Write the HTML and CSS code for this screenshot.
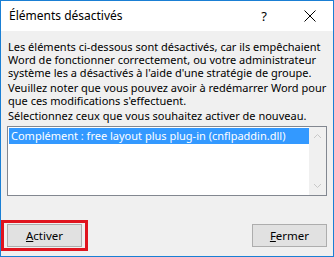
FILE: index.html
```html
<!DOCTYPE html>
<html lang="fr">
<head>
    <meta charset="UTF-8">
    <title>Éléments désactivés</title>
    <link rel="stylesheet" href="styles.css">
</head>
<body>
    <div class="window">
        <div class="titlebar">
            <span class="title">Éléments désactivés</span>
            <span class="help">?</span>
            <svg class="close" width="12" height="12" viewBox="0 0 12 12">
                <path d="M0.5 0.5 L11.5 11.5 M11.5 0.5 L0.5 11.5" stroke="#000" stroke-width="1" fill="none"/>
            </svg>
        </div>
        <div class="content">
            <p class="para">Les éléments ci-dessous sont désactivés, car ils empêchaient<br>Word de fonctionner correctement, ou votre administrateur<br>système les a désactivés à l'aide d'une stratégie de groupe.</p>
            <p class="para">Veuillez noter que vous pouvez avoir à redémarrer Word pour<br>que ces modifications s'effectuent.</p>
            <p class="para">Sélectionnez ceux que vous souhaitez activer de nouveau.</p>

            <div class="listbox">
                <div class="items">
                    <div class="item selected">Complément : free layout plus plug-in (cnflpaddin.dll)</div>
                </div>
                <div class="scrollbar">
                    <svg width="9" height="6" viewBox="0 0 9 6"><path d="M1 5 L4.5 1.5 L8 5" stroke="#c8c8c8" fill="none"/></svg>
                    <svg width="9" height="6" viewBox="0 0 9 6"><path d="M1 1 L4.5 4.5 L8 1" stroke="#c8c8c8" fill="none"/></svg>
                </div>
            </div>

            <div class="buttons">
                <div class="highlight">
                    <button class="btn"><u>A</u>ctiver</button>
                </div>
                <button class="btn"><u>F</u>ermer</button>
            </div>
        </div>
    </div>
</body>
</html>
```

FILE: styles.css
```css
body {
    margin: 0;
    font-family: 'Noto Sans', 'Open Sans', sans-serif;
    font-size: 11px;
    color: #000;
}

.window {
    width: 334px;
    height: 257px;
    box-sizing: border-box;
    border: 1px solid #1a7fd4;
    display: flex;
    flex-direction: column;
    background: #f0f0f0;
    overflow: hidden;
}

.titlebar {
    height: 30px;
    background: #fff;
    display: flex;
    align-items: center;
    padding-left: 8px;
    flex-shrink: 0;
}

.title {
    flex: 1;
    font-size: 12px;
    margin-top: -1px;
}

.help {
    font-size: 13px;
    margin-right: 37px;
    margin-top: -1px;
}

.close {
    margin-right: 17px;
}

.content {
    flex: 1;
    padding: 9px 6px 0 6px;
    display: flex;
    flex-direction: column;
}

.para {
    margin: 0 0 2px 1px;
    line-height: 13px;
    white-space: nowrap;
}

.listbox {
    margin-top: 2px;
    height: 68px;
    flex-shrink: 0;
    border: 1px solid #828790;
    background: #fff;
    display: flex;
}

.items {
    flex: 1;
    padding: 1px 0 1px 1px;
}

.item {
    height: 16px;
    line-height: 16px;
    padding-left: 2px;
    white-space: nowrap;
}

.selected {
    background: #3399ff;
    color: #fff;
}

.scrollbar {
    width: 17px;
    background: #f0f0f0;
    display: flex;
    flex-direction: column;
    justify-content: space-between;
    align-items: center;
    padding: 6px 0 6px;
}

.buttons {
    display: flex;
    justify-content: space-between;
    margin-top: 28px;
}

.highlight {
    position: relative;
}

.highlight::before {
    content: '';
    position: absolute;
    left: -6px;
    top: -4px;
    right: -6px;
    bottom: -4px;
    border: 3px solid #e0141e;
}

.btn {
    width: 75px;
    height: 23px;
    box-sizing: border-box;
    background: #e1e1e1;
    border: 1px solid #adadad;
    font-family: 'Noto Sans', 'Open Sans', sans-serif;
    font-size: 11.5px;
    color: #000;
    padding: 0;
    display: block;
}
```
